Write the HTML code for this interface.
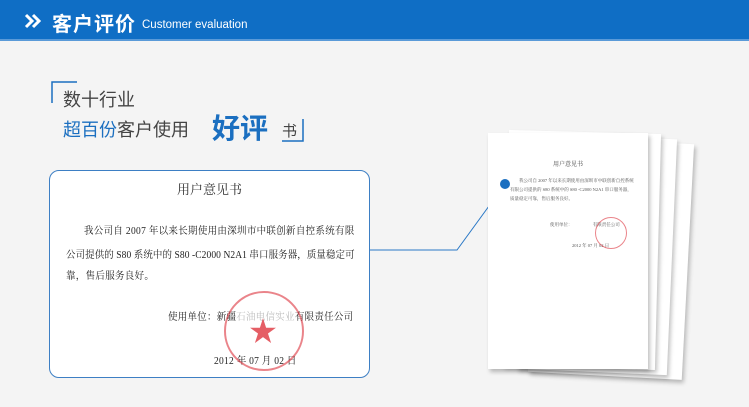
<!DOCTYPE html>
<html><head><meta charset="utf-8"><style>
*{margin:0;padding:0;box-sizing:border-box}
body{width:749px;height:407px;background:#f4f4f4;position:relative;overflow:hidden;font-family:"Liberation Sans","Noto Sans CJK SC",sans-serif}
.hdr{position:absolute;left:0;top:0;width:749px;height:41px;background:#0f6ec5;border-bottom:2px solid #5a9ad8}
.hdr .t{position:absolute;left:24px;top:8px;color:#fff;font-size:20px;font-weight:bold;letter-spacing:1px}
.hdr .e{position:absolute;left:142px;top:19px;color:#fff;font-size:11.5px}
.ser{font-family:"Liberation Serif","Noto Serif CJK SC",serif}
.card{position:absolute;left:49px;top:170px;width:321px;height:208px;border:1px solid #3d7fc4;border-radius:10px;background:#fff}
.card .l{position:absolute;white-space:nowrap;font-size:10.2px;color:#222;transform:scaleX(0.93);transform-origin:0 0}
.paper{position:absolute;background:#fff;box-shadow:2px 3px 4px rgba(0,0,0,.25)}
</style></head><body>
<div class="hdr">
<svg style="position:absolute;left:24px;top:13px" width="18" height="16"><path d="M2 2 L8 8 L2 14 M9 2 L15 8 L9 14" stroke="#fff" stroke-width="3" fill="none"/></svg>
<div class="t" style="left:52px">客户评价</div>
<div class="e">Customer evaluation</div>
</div>
<svg style="position:absolute;left:51px;top:81px" width="270" height="62"><path d="M1 22 V1 H26" stroke="#1b6fc0" stroke-width="1.5" fill="none"/><path d="M231 60 H252 V38" stroke="#1b6fc0" stroke-width="1.5" fill="none"/></svg>
<div style="position:absolute;left:63px;top:86px;font-size:18px;color:#444">数十行业</div>
<div style="position:absolute;left:63px;top:116px;font-size:18px;color:#444"><span style="color:#1b6fc0">超百份</span>客户使用</div>
<div style="position:absolute;left:212px;top:107px;font-size:28px;font-weight:bold;color:#1b6fc0">好评</div>
<div style="position:absolute;left:282px;top:120px;font-size:15px;color:#444">书</div>
<div class="card ser">
<div style="position:absolute;left:0;width:100%;top:8px;text-align:center;font-size:13px;color:#333">用户意见书</div>
<div class="l" style="left:34px;top:51px;letter-spacing:0.35px">我公司自 2007 年以来长期使用由深圳市中联创新自控系统有限</div>
<div class="l" style="left:16px;top:75px;letter-spacing:0.1px">公司提供的 S80 系统中的 S80 -C2000 N2A1 串口服务器，质量稳定可</div>
<div class="l" style="left:16px;top:96px;letter-spacing:0.35px">靠，售后服务良好。</div>
<div class="l" style="left:118px;top:137px;letter-spacing:0.3px">使用单位：新疆<span style="color:#bbb">石油电信实业</span>有限责任公司</div>
<div class="l" style="left:164px;top:181px;letter-spacing:0.3px">2012 年 07 月 02 日</div>
<div style="position:absolute;left:174px;top:120px;width:80px;height:80px;border:2px solid rgba(220,50,60,.6);border-radius:50%"></div>
<div style="position:absolute;left:199px;top:139px;font-size:28px;color:rgba(220,40,50,.75)">★</div>
</div>
<svg style="position:absolute;left:0;top:0" width="749" height="407"><path d="M370 250 H457 L505 184" stroke="#2a78c6" stroke-width="1" fill="none"/></svg>
<div class="paper" style="left:534px;top:140px;width:154px;height:236px;transform:rotate(3deg)"></div>
<div class="paper" style="left:522px;top:136px;width:150px;height:236px;transform:rotate(2.5deg)"></div>
<div class="paper" style="left:506px;top:132px;width:152px;height:236px;transform:rotate(1.5deg)"></div>
<div class="paper ser" style="left:488px;top:133px;width:160px;height:236px">
<div style="position:absolute;top:26px;width:100%;text-align:center;font-size:6px;color:#444">用户意见书</div>
<div style="position:absolute;left:22px;right:12px;top:43px;font-size:4.5px;line-height:9px;color:#555">&emsp;&emsp;我公司自 2007 年以来长期使用由深圳市中联创新自控系统有限公司提供的 S80 系统中的 S80 -C2000 N2A1 串口服务器，质量稳定可靠，售后服务良好。</div>
<div style="position:absolute;left:62px;top:89px;font-size:4.5px;color:#555">使用单位：　　　　　有限责任公司</div>
<div style="position:absolute;left:84px;top:110px;font-size:4.5px;color:#555">2012 年 07 月 02 日</div>
<div style="position:absolute;left:107px;top:84px;width:32px;height:32px;border:1px solid rgba(220,50,60,.6);border-radius:50%"></div>
</div>
<div style="position:absolute;left:500px;top:179px;width:10px;height:10px;border-radius:50%;background:#1b6fc0"></div>
</body></html>
